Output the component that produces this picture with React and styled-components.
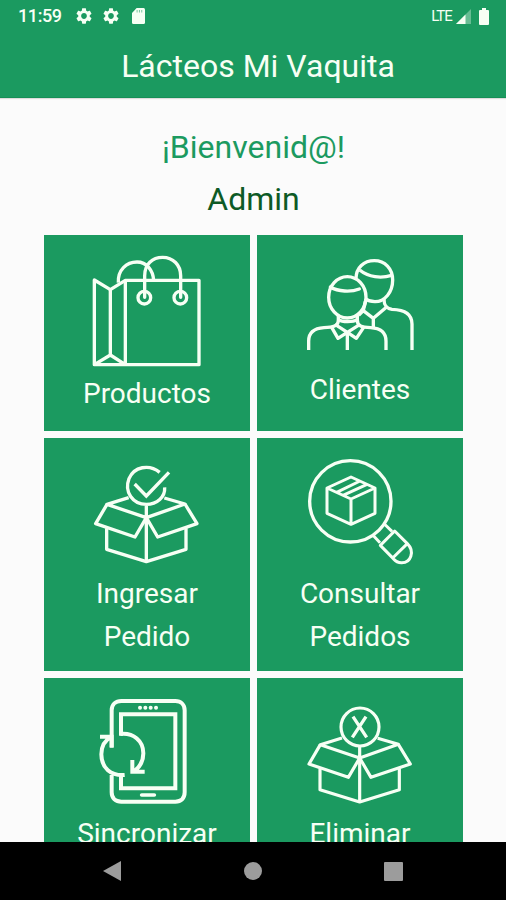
import React from 'react';
import styled, { createGlobalStyle } from 'styled-components';

const colors = {
	primary: '#1b9a60',
	dark: '#0d5a26',
	background: '#fbfbfb',
	line: '#f7fff4',
	nav: '#9c9c9c'
};

const GlobalStyle = createGlobalStyle`
* { box-sizing: border-box; }

body {
	margin: 0;
	font-family: Roboto, sans-serif;
	background-color: ${colors.background};
}
`

const Screen = styled.div`
width: 506px;
height: 900px;
overflow: hidden;

display: flex;
flex-direction: column;
`

const Header = styled.header`
flex: none;
height: 98px;
color: ${colors.line};
background-color: ${colors.primary};
border-bottom: 1px solid #158f56;
box-shadow: 0 1px 1px rgba(0, 0, 0, 0.12);
`

const StatusBar = styled.div`
height: 32px;
padding: 0 17px 0 18px;
display: flex;
align-items: center;
justify-content: space-between;
`

const StatusGroup = styled.div`
display: flex;
align-items: center;
`

const Clock = styled.span`
width: 58px;
font-size: 18px;
font-weight: 500;
letter-spacing: -0.4px;
line-height: 32px;
`

const Network = styled.span`
font-size: 15px;
letter-spacing: -0.9px;
margin-right: 4px;
line-height: 30px;
`

const StatusIcon = styled.svg`
display: block;
fill: ${colors.line};
margin-right: ${(props) => props.$gap || 0}px;
`

const Title = styled.h1`
margin: 0;
padding-left: 10px;
text-align: center;
font-size: 32px;
font-weight: 400;
line-height: 68px;
`

const Content = styled.main`
flex: 1;
min-height: 0;
overflow: hidden;
padding: 23px 43px 0 44px;
`

const Greeting = styled.p`
margin: 0;
text-align: center;
font-size: 32px;
line-height: 52px;
color: ${(props) => props.$color};
`

const Grid = styled.div`
margin-top: 10px;
display: grid;
grid-template-columns: 206px 206px;
grid-template-rows: 196px 233px 233px;
gap: 7px;
`

const Card = styled.div`
padding-top: 10px;
display: flex;
flex-direction: column;
align-items: center;
color: ${colors.line};
background-color: ${colors.primary};
`

const Drawing = styled.svg`
flex: none;
display: block;
fill: none;
stroke: ${colors.line};
stroke-width: ${(props) => props.$stroke || 8};
stroke-linejoin: round;
`

const Label = styled.span`
margin-top: ${(props) => props.$top}px;
text-align: center;
font-size: 28px;
line-height: 43px;
white-space: pre-line;
`

const NavBar = styled.nav`
flex: none;
height: 58px;
padding: 0 103px 0 103px;
display: flex;
align-items: center;
justify-content: space-between;
background-color: #000;

svg { display: block; fill: ${colors.nav}; }
`

const GearIcon = ({ gap }) => (
	<StatusIcon width="16" height="16" viewBox="2 2 20 20" $gap={gap}>
		<path d="M19.14 12.94c.04-.3.06-.61.06-.94 0-.32-.02-.64-.07-.94l2.03-1.58c.18-.14.23-.41.12-.61l-1.92-3.32c-.12-.22-.37-.29-.59-.22l-2.39.96c-.5-.38-1.03-.7-1.62-.94l-.36-2.54c-.04-.24-.24-.41-.48-.41h-3.84c-.24 0-.43.17-.47.41l-.36 2.54c-.59.24-1.13.57-1.62.94l-2.39-.96c-.22-.08-.47 0-.59.22L2.74 8.87c-.12.21-.08.47.12.61l2.03 1.58c-.05.3-.09.63-.09.94s.02.64.07.94l-2.03 1.58c-.18.14-.23.41-.12.61l1.92 3.32c.12.22.37.29.59.22l2.39-.96c.5.38 1.03.7 1.62.94l.36 2.54c.05.24.24.41.48.41h3.84c.24 0 .44-.17.47-.41l.36-2.54c.59-.24 1.13-.56 1.62-.94l2.39.96c.22.08.47 0 .59-.22l1.92-3.32c.12-.22.07-.47-.12-.61l-2.01-1.58zM12 15.6c-1.98 0-3.6-1.62-3.6-3.6s1.62-3.6 3.6-3.6 3.6 1.62 3.6 3.6-1.62 3.6-3.6 3.6z" />
	</StatusIcon>
);

const BagIcon = () => (
	<Drawing width="134" height="125" viewBox="0 0 402 375" $stroke={10}>
		<path d="M43 105L91 134L136 106H357V359H43Z" />
		<path d="M91 134V330M136 106V359M43 359L91 330L136 359" />
		<path d="M115 113C113 75 139 51 171 51C200 51 219 75 221 106" />
		<path d="M194 157V92C194 58 217 37 248 37C279 37 302 60 302 92V157" strokeLinecap="round" />
		<circle cx="193" cy="158" r="19" />
		<circle cx="301" cy="158" r="19" />
	</Drawing>
);

const PeopleIcon = () => (
	<Drawing width="134" height="125" viewBox="-6 0 402 375" $stroke={10}>
		<ellipse cx="157" cy="157" rx="56" ry="62" />
		<path d="M106 126C130 140 167 142 193 132" strokeLinecap="round" />
		<path d="M183 101C183 67 207 47 238 47C270 47 293 71 293 105C293 142 269 170 240 170C228 170 218 167 210 161" />
		<path d="M194 75C221 97 258 101 290 91" />
		<path d="M130 211V225C130 244 114 247 87 248C57 250 41 264 41 288V315" />
		<path d="M187 211V225C187 244 200 247 227 248C258 250 273 264 273 288V315" />
		<path d="M130 224C142 232 174 232 187 224M120 238L157 262V315M157 262L195 238M157 262L129 280L110 247M157 262L184 280L206 247" />
		<path d="M211 168L205 197L235 220V248M205 197L191 211M235 220L274 187M267 162C267 179 272 190 291 193C329 194 351 207 351 237V315" />
	</Drawing>
);

// open cardboard box, shared by the new order and delete order cards
const Box = () => (
	<>
		<path d="M146 143L81 163L199 203L315 162L253 144M199 168V333" />
		<path d="M81 163L47 221L165 261L199 203L233 261L351 221L315 162" />
		<path d="M80 235V298L199 335L318 298V235" />
	</>
);

const NewOrderIcon = () => (
	<Drawing width="134" height="125" viewBox="0 -6 402 375" $stroke={10}>
		<Box />
		<path d="M239 67C207 41 162 50 147 86C132 126 158 163 199 163C231 163 256 141 254 112" />
		<path d="M164 102L199 138L267 67" strokeLinejoin="miter" />
	</Drawing>
);

const DeleteOrderIcon = () => (
	<Drawing width="134" height="125" viewBox="-6 9 402 375" $stroke={9.5}>
		<g transform="translate(-5 16)">
			<Box />
		</g>
		<circle cx="195" cy="126" r="57" />
		<path d="M174 95L215 157M213 95L172 157" strokeWidth="10" />
	</Drawing>
);

const SearchOrderIcon = () => (
	<Drawing width="134" height="125" viewBox="-6 -6 402 375" $stroke={9}>
		<circle cx="166" cy="154" r="122" strokeWidth="10" />
		<path d="M168 81L240 114V190L168 223L96 190V114ZM96 114L168 147L240 114M168 147V223M216 103L144 136M195 93L125 127" />
		<path d="M234 256L255 278M268 222L291 244M256 286L299 243L337 281C360 304 348 339 319 338C309 338 302 334 295 326ZM293 324L337 281" />
	</Drawing>
);

const SyncIcon = () => (
	<Drawing width="134" height="125" viewBox="0 9 402 375" $stroke={12}>
		<path d="M95 187V76C95 59 107 48 124 48H286C303 48 314 59 314 76V322C314 340 303 350 286 350H124C107 350 95 340 95 322V270" />
		<path d="M123 152V88H286V310H123V270" strokeLinejoin="miter" />
		<path d="M121 147C161 143 190 168 190 205C190 227 181 245 163 258M157 225V260H194" strokeLinejoin="miter" />
		<path d="M134 270C93 273 64 249 64 208C64 182 75 165 94 155M60 155H95V188" strokeLinejoin="miter" />
		<path d="M185 330H223" strokeLinecap="round" strokeWidth="11" />
		<path d="M180 68H180.1M196 68H196.1M212 68H212.1M228 68H228.1" strokeLinecap="round" />
	</Drawing>
);

const options = [
	{ name: 'Productos', icon: <BagIcon />, top: 2 },
	{ name: 'Clientes', icon: <PeopleIcon />, top: -2 },
	{ name: 'Ingresar\nPedido', icon: <NewOrderIcon />, top: -1 },
	{ name: 'Consultar\nPedidos', icon: <SearchOrderIcon />, top: -1 },
	{ name: 'Sincronizar', icon: <SyncIcon />, top: -1 },
	{ name: 'Eliminar', icon: <DeleteOrderIcon />, top: -1 }
];

const App = () => {
	return (
		<Screen>
			<GlobalStyle />

			<Header>
				<StatusBar>
					<StatusGroup>
						<Clock>11:59</Clock>
						<GearIcon gap={11} />
						<GearIcon gap={13} />
						<StatusIcon width="13" height="16" viewBox="0 0 14 16" preserveAspectRatio="none">
							<path d="M5 0H12.5Q14 0 14 1.5V14.5Q14 16 12.5 16H1.5Q0 16 0 14.5V5Z" />
							<path d="M5.5 2V4.5M8 2V4.5M10.5 2V4.5" stroke={colors.primary} strokeWidth="0.6" />
						</StatusIcon>
					</StatusGroup>

					<StatusGroup>
						<Network>LTE</Network>
						<StatusIcon width="15" height="15" viewBox="0 0 15 15" $gap={8}>
							<path d="M15 0V15H0Z" opacity="0.35" />
							<path d="M9.5 5.5V15H0Z" />
						</StatusIcon>
						<StatusIcon width="10" height="17" viewBox="0 0 10 17">
							<path d="M3 0H7V2H9Q10 2 10 3V16Q10 17 9 17H1Q0 17 0 16V3Q0 2 1 2H3Z" />
						</StatusIcon>
					</StatusGroup>
				</StatusBar>

				<Title>Lácteos Mi Vaquita</Title>
			</Header>

			<Content>
				<Greeting $color={colors.primary}>¡Bienvenid@!</Greeting>
				<Greeting $color={colors.dark}>Admin</Greeting>

				<Grid>
					{options.map((option) => (
						<Card key={option.name}>
							{option.icon}
							<Label $top={option.top}>{option.name}</Label>
						</Card>
					))}
				</Grid>
			</Content>

			<NavBar>
				<svg width="18" height="20" viewBox="0 0 18 20">
					<path d="M18 0V20L0 10Z" />
				</svg>
				<svg width="18" height="18" viewBox="0 0 18 18">
					<circle cx="9" cy="9" r="9" />
				</svg>
				<svg width="19" height="19" viewBox="0 0 19 19">
					<rect width="19" height="19" rx="1" />
				</svg>
			</NavBar>
		</Screen>
	);
};

export default App;
